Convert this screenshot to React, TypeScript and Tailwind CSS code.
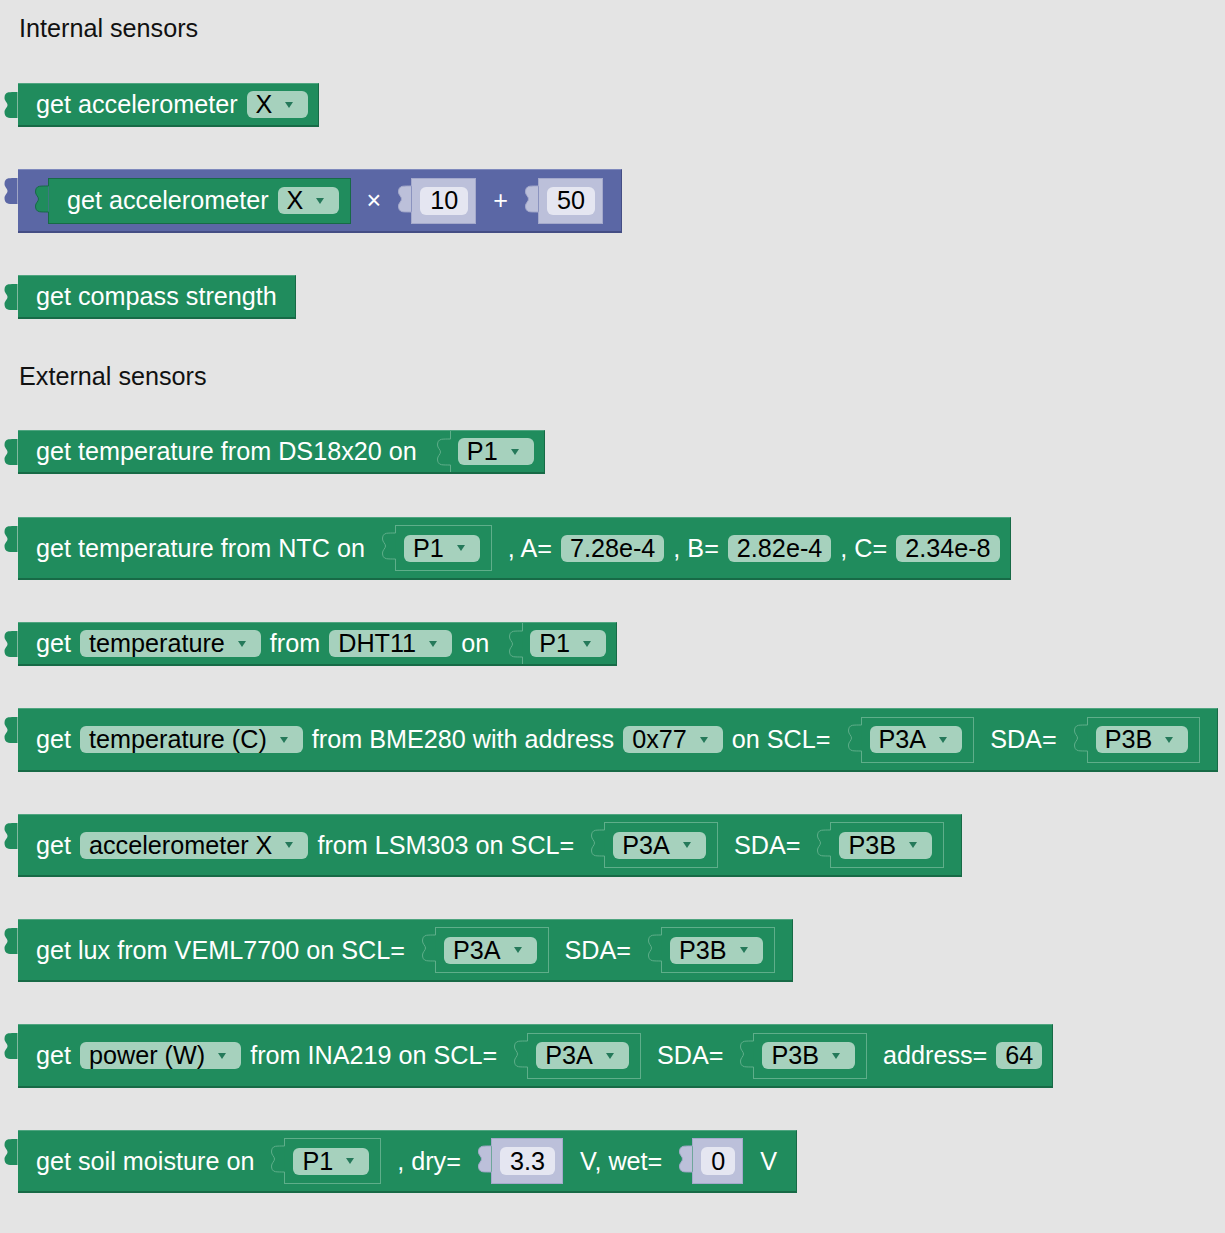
import type { ReactNode } from "react";

// blockly-like palette
const GREEN = "#208c5d";
const GREEN_EDGE = "#5fae8a";
const GREEN_DARK = "#176a46";
const SHADOW = "#bcc0da";
const SHADOW_EDGE = "#a4a9cb";

// puzzle tab drawn on the left edge of a block, from y=0 to y=h
function Tab({ h, off, fill, stroke }: { h: number; off: number; fill: string; stroke: string }) {
  const d =
    `M13.5,0 V${off} ` +
    `C10,${off} 6,${off} 4.5,${off + 0.3} ` +
    `C1.5,${off + 0.8} 0.5,${off + 3} 0.5,${off + 6} ` +
    `C0.5,${off + 9} 3.5,${off + 10.5} 3.5,${off + 13} ` +
    `C3.5,${off + 15.5} 0.5,${off + 17} 0.5,${off + 20} ` +
    `C0.5,${off + 23} 1.5,${off + 25.2} 4.5,${off + 25.7} ` +
    `C6,${off + 26} 10,${off + 26} 13.5,${off + 26} V${h}`;
  return (
    <svg width="14" height={h} viewBox={`0 0 14 ${h}`} className="block shrink-0">
      <path d={d} fill={fill} stroke={stroke} strokeWidth="1" />
    </svg>
  );
}

function L({ children }: { children: ReactNode }) {
  return <span className="whitespace-pre text-white">{children}</span>;
}

function Arrow() {
  return (
    <svg width="8" height="6" viewBox="0 0 8 6" className="ml-[13px] block shrink-0">
      <path d="M0,0 H8 L4,6 Z" fill="#25795a" />
    </svg>
  );
}

function Drop({ children }: { children: ReactNode }) {
  return (
    <div className="flex h-[27px] items-center rounded-[6px] bg-[#a6d1bd] pl-[9px] pr-[15px] text-black">
      <span className="whitespace-pre">{children}</span>
      <Arrow />
    </div>
  );
}

function Num({ children }: { children: ReactNode }) {
  return (
    <div className="flex h-[27px] items-center rounded-[6px] bg-[#a6d1bd] px-[9px] text-black">
      <span className="whitespace-pre">{children}</span>
    </div>
  );
}

function Inner({ children, dark }: { children: ReactNode; dark?: boolean }) {
  return (
    <div className={`${dark ? "ml-[11px] mr-[6px]" : "ml-[8px] mr-[7px]"} flex items-start`}>
      <Tab h={46} off={8} fill={GREEN} stroke={dark ? GREEN_DARK : GREEN_EDGE} />
      <div
        className={`flex h-[46px] items-center gap-[9px] border-y border-r bg-[#208c5d] ${
          dark ? "border-[#176a46] pl-[18px] pr-[11px]" : "border-[#5fae8a] pl-[8px] pr-[11px]"
        }`}
      >
        {children}
      </div>
    </div>
  );
}

function Shadow({ v }: { v: string }) {
  return (
    <div className="ml-[8px] mr-[8px] flex items-start">
      <Tab h={46} off={8} fill={SHADOW} stroke={SHADOW_EDGE} />
      <div className="flex h-[46px] items-center border-y border-r border-[#a4a9cb] bg-[#bcc0da] pl-[8px] pr-[7px]">
        <div className="flex h-[28px] items-center rounded-[6px] bg-[#e5e6f1] px-[10px] text-black">{v}</div>
      </div>
    </div>
  );
}

function Attach({ children }: { children: ReactNode }) {
  return (
    <div className="ml-[11px] flex self-stretch">
      <Tab h={41} off={8} fill={GREEN} stroke={GREEN_EDGE} />
      <div className="flex items-center bg-[#208c5d] pl-[7px] pr-[10px]">{children}</div>
    </div>
  );
}

function Block({
  h,
  pl = "pl-[18px]",
  pr = "pr-[10px]",
  purple,
  mt,
  children,
}: {
  h: string;
  pl?: string;
  pr?: string;
  purple?: boolean;
  mt: string;
  children: ReactNode;
}) {
  const body = purple
    ? "bg-[#5b67a5] border-t-[#7f89bd] border-b-[#444d84] border-r-[#444d84]"
    : "bg-[#208c5d] border-t-[#4fa580] border-b-[#176a46] border-r-[#176a46]";
  return (
    <div className={`flex items-start ${mt}`}>
      <Tab h={40} off={9} fill={purple ? "#5b67a5" : GREEN} stroke="none" />
      <div className={`flex items-center gap-[9px] border-t border-r border-b-2 leading-[27px] ${body} ${h} ${pl} ${pr}`}>
        {children}
      </div>
    </div>
  );
}

function Heading({ children, mt }: { children: ReactNode; mt: string }) {
  return <div className={`ml-[15px] h-[30px] leading-[30px] text-[#111] ${mt}`}>{children}</div>;
}

export default function App() {
  return (
    <div className="min-h-screen w-full bg-[#e4e4e4] pl-[4px] pt-[13px] font-['Liberation_Sans',Arial,sans-serif] text-[25.2px]">
      <div className="flex w-max flex-col items-start">
        <Heading mt="mt-0">Internal sensors</Heading>

        <Block h="h-[44px]" mt="mt-[40px]">
          <L>get accelerometer</L>
          <Drop>X</Drop>
        </Block>

        <Block h="h-[64px]" mt="mt-[42px]" purple pl="pl-[6px]" pr="pr-[10px]">
          <Inner dark>
            <L>get accelerometer</L>
            <Drop>X</Drop>
          </Inner>
          <L>×</L>
          <Shadow v="10" />
          <L>+</L>
          <Shadow v="50" />
        </Block>

        <Block h="h-[44px]" mt="mt-[42px]" pr="pr-[18px]">
          <L>get compass strength</L>
        </Block>

        <Heading mt="mt-[42px]">External sensors</Heading>

        <Block h="h-[44px]" mt="mt-[39px]" pr="pr-0">
          <L>get temperature from DS18x20 on</L>
          <Attach>
            <Drop>P1</Drop>
          </Attach>
        </Block>

        <Block h="h-[63px]" mt="mt-[43px]">
          <L>get temperature from NTC on</L>
          <Inner>
            <Drop>P1</Drop>
          </Inner>
          <L>, A=</L>
          <Num>7.28e-4</Num>
          <L>, B=</L>
          <Num>2.82e-4</Num>
          <L>, C=</L>
          <Num>2.34e-8</Num>
        </Block>

        <Block h="h-[44px]" mt="mt-[42px]" pr="pr-0">
          <L>get</L>
          <Drop>temperature</Drop>
          <L>from</L>
          <Drop>DHT11</Drop>
          <L>on</L>
          <Attach>
            <Drop>P1</Drop>
          </Attach>
        </Block>

        <Block h="h-[64px]" mt="mt-[42px]">
          <L>get</L>
          <Drop>temperature (C)</Drop>
          <L>from BME280 with address</L>
          <Drop>0x77</Drop>
          <L>on SCL=</L>
          <Inner>
            <Drop>P3A</Drop>
          </Inner>
          <L>SDA=</L>
          <Inner>
            <Drop>P3B</Drop>
          </Inner>
        </Block>

        <Block h="h-[63px]" mt="mt-[42px]">
          <L>get</L>
          <Drop>accelerometer X</Drop>
          <L>from LSM303 on SCL=</L>
          <Inner>
            <Drop>P3A</Drop>
          </Inner>
          <L>SDA=</L>
          <Inner>
            <Drop>P3B</Drop>
          </Inner>
        </Block>

        <Block h="h-[63px]" mt="mt-[42px]">
          <L>get lux from VEML7700 on SCL=</L>
          <Inner>
            <Drop>P3A</Drop>
          </Inner>
          <L>SDA=</L>
          <Inner>
            <Drop>P3B</Drop>
          </Inner>
        </Block>

        <Block h="h-[64px]" mt="mt-[42px]">
          <L>get</L>
          <Drop>power (W)</Drop>
          <L>from INA219 on SCL=</L>
          <Inner>
            <Drop>P3A</Drop>
          </Inner>
          <L>SDA=</L>
          <Inner>
            <Drop>P3B</Drop>
          </Inner>
          <L>address=</L>
          <Num>64</Num>
        </Block>

        <Block h="h-[63px]" mt="mt-[42px]" pr="pr-[10px]">
          <L>get soil moisture on</L>
          <Inner>
            <Drop>P1</Drop>
          </Inner>
          <L>, dry=</L>
          <Shadow v="3.3" />
          <L>V, wet=</L>
          <Shadow v="0" />
          <L>V</L>
          <span className="w-[0px]" />
        </Block>
      </div>
    </div>
  );
}
